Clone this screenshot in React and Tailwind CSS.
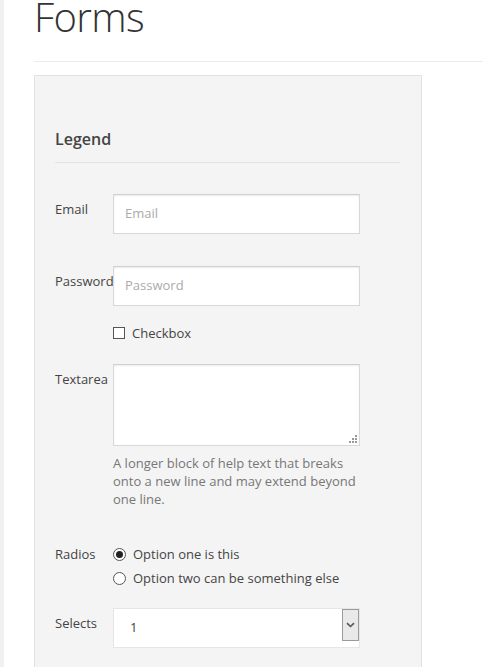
import React from "react";

const font = { fontFamily: '"Open Sans", "Noto Sans", sans-serif' };

const Row = ({ label, children, className = "" }) => (
  <div className={`flex ${className}`}>
    <div className="w-[58px] shrink-0 pt-[6px] text-[13px] leading-[18px] text-[#444]">{label}</div>
    <div className="w-[247px]">{children}</div>
  </div>
);

const TextInput = ({ placeholder }) => (
  <div className="h-[40px] w-full border border-[#d9d9d9] border-t-[#cfcfcf] bg-white shadow-[inset_0_1px_2px_rgba(0,0,0,0.08)] flex items-center pl-[11px] text-[13px] text-[#aaa]">
    {placeholder}
  </div>
);

export default function App() {
  return (
    <div className="flex min-h-screen bg-white overflow-hidden" style={font}>
      <div className="w-[4px] shrink-0 bg-[#f1f1f1]" />
      <div className="flex-1 pl-[30px]">
        <h1 className="mt-[-3px] text-[40px] leading-[40px] tracking-[-0.6px] font-light text-[#333]">Forms</h1>
        <div className="mt-[24px] h-px bg-[#ebebeb]" />
        <div className="mt-[13px] w-[388px] min-h-[600px] border border-[#e2e2e2] bg-[#f4f4f4] px-[20px] pt-[52px] pb-[30px]">
          <div className="text-[16px] leading-[22px] font-semibold text-[#444]">Legend</div>
          <div className="mt-[12px] w-[345px] h-px bg-[#e3e3e3]" />

          <Row label="Email" className="mt-[31px]">
            <TextInput placeholder="Email" />
          </Row>
          <Row label="Password" className="mt-[32px]">
            <TextInput placeholder="Password" />
          </Row>
          <Row label="" className="mt-[13px]">
            <div className="flex items-center gap-[7px] pt-[5px] text-[13px] leading-[18px] text-[#444]">
              <span className="w-[12px] h-[12px] border border-[#555] bg-white" />
              Checkbox
            </div>
          </Row>
          <Row label="Textarea" className="mt-[22px]">
            <div className="relative h-[82px] w-full border border-[#d9d9d9] border-t-[#cfcfcf] bg-white shadow-[inset_0_1px_2px_rgba(0,0,0,0.08)]">
              <svg className="absolute right-[2px] bottom-[2px]" width="8" height="8" viewBox="0 0 8 8">
                <rect x="6" y="0" width="2" height="2" fill="#999" />
                <rect x="3" y="3" width="2" height="2" fill="#999" />
                <rect x="6" y="3" width="2" height="2" fill="#999" />
                <rect x="0" y="6" width="2" height="2" fill="#999" />
                <rect x="3" y="6" width="2" height="2" fill="#999" />
                <rect x="6" y="6" width="2" height="2" fill="#999" />
              </svg>
            </div>
            <p className="mt-[8px] text-[13px] leading-[18px] text-[#777]">
              A longer block of help text that breaks onto a new line and may extend beyond one line.
            </p>
          </Row>

          <div className="mt-[31px] flex">
            <div className="w-[58px] shrink-0 pt-[6px] text-[13px] leading-[18px] text-[#444]">Radios</div>
            <div className="pt-[6px] flex flex-col gap-[6px] text-[13px] leading-[18px] text-[#444]">
              <div className="flex items-center gap-[7px]">
                <span className="w-[13px] h-[13px] rounded-full border border-[#555] bg-white flex items-center justify-center">
                  <span className="w-[7px] h-[7px] rounded-full bg-[#222]" />
                </span>
                Option one is this
              </div>
              <div className="flex items-center gap-[7px]">
                <span className="w-[13px] h-[13px] rounded-full border border-[#555] bg-white" />
                Option two can be something else
              </div>
            </div>
          </div>

          <Row label="Selects" className="mt-[21px]">
            <div className="relative h-[40px] w-full border border-[#e6e6e6] bg-white flex items-center pl-[16px] text-[13px] text-[#444]">
              1
              <div className="absolute right-0 top-0 w-[17px] h-[32px] border border-[#9a9a9a] bg-[#e9e9e9] flex items-center justify-center">
                <svg width="9" height="6" viewBox="0 0 9 6">
                  <path d="M1 1.2 L4.5 4.5 L8 1.2" fill="none" stroke="#555" strokeWidth="1.6" />
                </svg>
              </div>
            </div>
          </Row>
        </div>
      </div>
    </div>
  );
}
